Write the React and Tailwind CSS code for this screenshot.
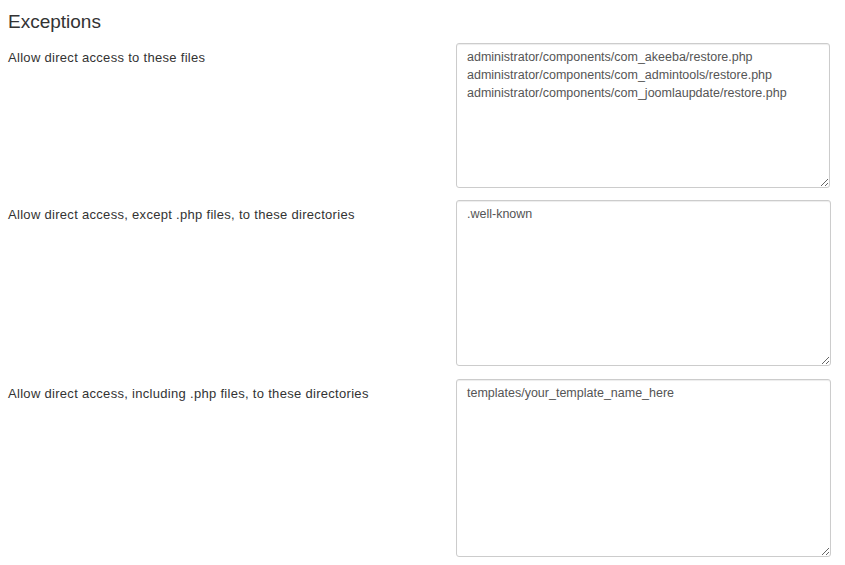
import React from 'react';

const rows = [
  {
    label: 'Allow direct access to these files',
    value:
      'administrator/components/com_akeeba/restore.php\nadministrator/components/com_admintools/restore.php\nadministrator/components/com_joomlaupdate/restore.php',
    size: 'w-[374px] h-[145px]',
    gap: '',
  },
  {
    label: 'Allow direct access, except .php files, to these directories',
    value: '.well-known',
    size: 'w-[375px] h-[166px]',
    gap: 'mt-[12px]',
  },
  {
    label: 'Allow direct access, including .php files, to these directories',
    value: 'templates/your_template_name_here',
    size: 'w-[375px] h-[178px]',
    gap: 'mt-[13px]',
  },
];

export default function App() {
  return (
    <div className="min-h-[565px] w-[845px] bg-white px-2 pt-[10px] font-['Liberation_Sans',Arial,sans-serif] text-[#333]">
      <h3 className="text-[19px] leading-[23px] text-[#333]">Exceptions</h3>
      <div className="mt-[10px] flex flex-col">
        {rows.map((r) => (
          <div key={r.label} className={`flex ${r.gap}`}>
            <label className="w-[448px] shrink-0 pt-[6px] text-[13px] leading-[18px] tracking-[0.3px]">
              {r.label}
            </label>
            <textarea
              readOnly
              defaultValue={r.value}
              className={`${r.size} resize rounded-[3px] border border-[#ccc] bg-white px-[10px] py-[4px] text-[12.5px] leading-[18px] text-[#555] shadow-[inset_0_1px_1px_rgba(0,0,0,0.075)] outline-none`}
            />
          </div>
        ))}
      </div>
    </div>
  );
}
